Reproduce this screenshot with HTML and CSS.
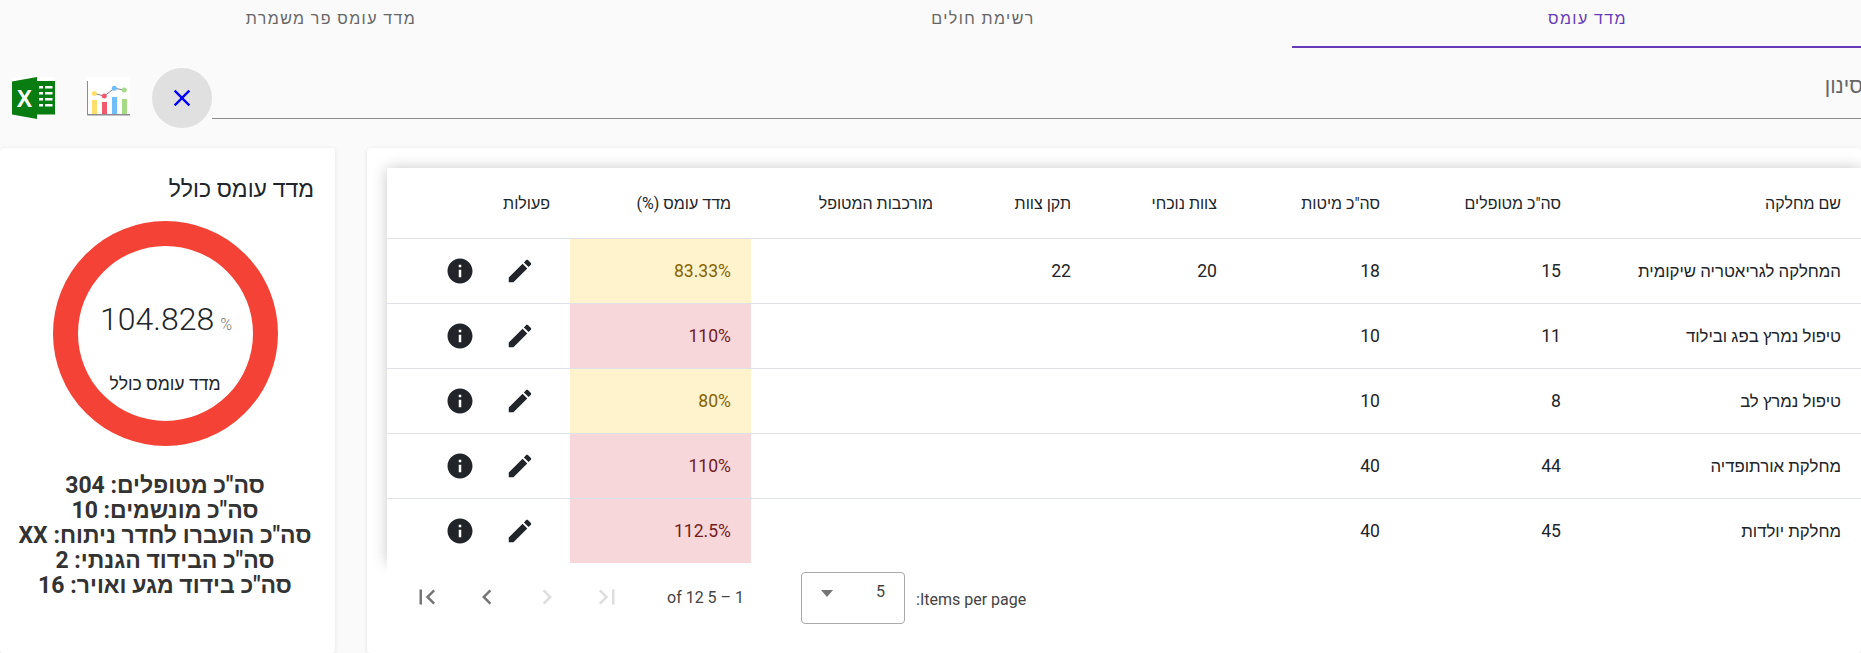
FILE: index.html
```html
<!DOCTYPE html>
<html lang="he" dir="rtl">
<head>
    <meta charset="UTF-8">
    <title>מדד עומס</title>
    <link rel="stylesheet" href="styles.css">
</head>
<body>
    <!-- Tabs -->
    <div class="tabs">
        <div class="tab tab-active">מדד עומס</div>
        <div class="tab tab-second">רשימת חולים</div>
        <div class="tab tab-third">מדד עומס פר משמרת</div>
    </div>

    <!-- Filter row -->
    <div class="filter-row">
        <div class="filter-field"><span class="filter-label">סינון</span></div>
        <button class="clear-button">
            <svg class="clear-icon" viewBox="0 0 24 24"><path d="M19 6.41L17.59 5 12 10.59 6.41 5 5 6.41 10.59 12 5 17.59 6.41 19 12 13.41 17.59 19 19 17.59 13.41 12z"/></svg>
        </button>
        <svg class="chart-icon" viewBox="0 0 43 42">
            <rect width="43" height="42" fill="#fff"/>
            <rect x="5" y="23" width="5" height="14" fill="#ffdf6b"/>
            <rect x="15" y="25" width="5" height="12" fill="#f2596c"/>
            <rect x="25" y="20" width="5" height="17" fill="#70bdfb"/>
            <rect x="35" y="22" width="5" height="15" fill="#a5da86"/>
            <rect x="0" y="4" width="1" height="34" fill="#8f8a90"/>
            <rect x="0" y="37" width="43" height="1.5" fill="#8f8a90"/>
            <polyline points="7.3,16.5 17.3,19 27.3,11.3 37.3,13" fill="none" stroke="#8a7f8a" stroke-width="1"/>
            <circle cx="7.3" cy="16.5" r="2.5" fill="#ffdf6b"/>
            <circle cx="17.3" cy="19" r="2.5" fill="#f2596c"/>
            <circle cx="27.3" cy="11.3" r="2.5" fill="#70bdfb"/>
            <circle cx="37.3" cy="13" r="2.5" fill="#a5da86"/>
        </svg>
        <svg class="excel-icon" viewBox="0 0 43 42">
            <rect width="43" height="42" fill="#fff"/>
            <rect x="24" y="4" width="19" height="33.5" fill="#0a7d12"/>
            <g fill="#fff">
                <rect x="27" y="9" width="4" height="2.5"/><rect x="33" y="9" width="7.5" height="2.5"/>
                <rect x="27" y="15" width="4" height="2.5"/><rect x="33" y="15" width="7.5" height="2.5"/>
                <rect x="27" y="21" width="4" height="2.5"/><rect x="33" y="21" width="7.5" height="2.5"/>
                <rect x="27" y="27" width="4" height="2.5"/><rect x="33" y="27" width="7.5" height="2.5"/>
            </g>
            <polygon points="0,4.5 25,0 25,42 0,37.5" fill="#0a7d12"/>
            <text x="12.5" y="30" class="excel-letter">X</text>
        </svg>
    </div>

    <div class="main">
        <!-- Department table -->
        <div class="card table-card">
            <div class="table-wrap">
                <table class="load-table">
                    <colgroup>
                        <col class="col-name"><col class="col-patients"><col class="col-beds"><col class="col-staff">
                        <col class="col-norm"><col class="col-complex"><col class="col-load"><col class="col-actions">
                    </colgroup>
                    <thead>
                        <tr>
                            <th>שם מחלקה</th>
                            <th>סה"כ מטופלים</th>
                            <th>סה"כ מיטות</th>
                            <th>צוות נוכחי</th>
                            <th>תקן צוות</th>
                            <th>מורכבות המטופל</th>
                            <th>מדד עומס (%)</th>
                            <th>פעולות</th>
                        </tr>
                    </thead>
                    <tbody id="tableBody"></tbody>
                </table>
            </div>

            <div class="paginator">
                <span class="page-label">Items per page:</span>
                <div class="page-select">
                    <span class="page-select-value">5</span>
                    <span class="page-select-arrow"></span>
                </div>
                <span class="page-range">1 – 5 of 12</span>
                <div class="page-buttons">
                    <svg class="page-icon disabled" viewBox="0 0 24 24"><path d="M5.59 7.41L10.18 12l-4.59 4.59L7 18l6-6-6-6zM16 6h2v12h-2z"/></svg>
                    <svg class="page-icon disabled" viewBox="0 0 24 24"><path d="M10 6L8.59 7.41 13.17 12l-4.58 4.59L10 18l6-6z"/></svg>
                    <svg class="page-icon" viewBox="0 0 24 24"><path d="M15.41 7.41L14 6l-6 6 6 6 1.41-1.41L10.83 12z"/></svg>
                    <svg class="page-icon" viewBox="0 0 24 24"><path d="M18.41 16.59L13.82 12l4.59-4.59L17 6l-6 6 6 6zM6 6h2v12H6z"/></svg>
                </div>
            </div>
        </div>

        <!-- Overall gauge -->
        <div class="card gauge-card">
            <h2 class="gauge-title">מדד עומס כולל</h2>
            <div class="gauge">
                <div class="gauge-value" dir="ltr">104.828<span class="gauge-unit">%</span></div>
                <div class="gauge-label">מדד עומס כולל</div>
            </div>
            <div class="gauge-stats">
                <div>סה"כ מטופלים: 304</div>
                <div>סה"כ מונשמים: 10</div>
                <div>סה"כ הועברו לחדר ניתוח: XX</div>
                <div>סה"כ הבידוד הגנתי: 2</div>
                <div>סה"כ בידוד מגע ואויר: 16</div>
            </div>
        </div>
    </div>

    <script>
        const rows = [
            ['המחלקה לגריאטריה שיקומית', 15, 18, 20, 22, '83.33%', 'warn'],
            ['טיפול נמרץ בפג ובילוד', 11, 10, '', '', '110%', 'high'],
            ['טיפול נמרץ לב', 8, 10, '', '', '80%', 'warn'],
            ['מחלקת אורתופדיה', 44, 40, '', '', '110%', 'high'],
            ['מחלקת יולדות', 45, 40, '', '', '112.5%', 'high']
        ];
        const editPath = 'M3 17.25V21h3.75L17.81 9.94l-3.75-3.75L3 17.25zM20.71 7.04c.39-.39.39-1.02 0-1.41l-2.34-2.34c-.39-.39-1.02-.39-1.41 0l-1.83 1.83 3.75 3.75 1.83-1.83z';
        const infoPath = 'M12 2C6.48 2 2 6.48 2 12s4.48 10 10 10 10-4.48 10-10S17.52 2 12 2zm1 15h-2v-6h2v6zm0-8h-2V7h2v2z';
        const tableBody = document.getElementById('tableBody');

        // Build the table rows
        rows.forEach(row => {
            const tr = document.createElement('tr');
            tr.innerHTML = `
                <td class="name-cell">${row[0]}</td><td>${row[1]}</td><td>${row[2]}</td><td>${row[3]}</td><td>${row[4]}</td><td></td>
                <td class="load-${row[6]}">${row[5]}</td>
                <td><div class="actions">
                    <svg class="action-icon" viewBox="0 0 24 24"><path d="${editPath}"/></svg>
                    <svg class="action-icon" viewBox="0 0 24 24"><path d="${infoPath}"/></svg>
                </div></td>`;
            tableBody.appendChild(tr);
        });
    </script>
</body>
</html>
```

FILE: styles.css
```css
body {
    margin: 0;
    width: 1861px;
    height: 653px;
    overflow: hidden;
    background-color: #fafafa;
    color: #212529;
    font-family: Roboto, "Liberation Sans", sans-serif;
}

/* Tabs */
.tabs {
    display: grid;
    grid-template-columns: 569px 618px 674px;
    height: 48px;
}
.tab {
    padding-top: 9px;
    box-sizing: border-box;
    text-align: center;
    font-size: 16px;
    line-height: 20px;
    letter-spacing: 1.4px;
    color: #666;
}
.tab-active {
    padding-left: 22px;
    color: #673ab7;
    border-bottom: 2px solid #673ab7;
}
.tab-third {
    padding-right: 12px;
}

/* Filter row */
.filter-row {
    display: flex;
    align-items: flex-start;
    height: 100px;
    padding: 20px 0 0 12px;
    box-sizing: border-box;
}
.filter-field {
    flex: 1;
    height: 51px;
    border-bottom: 1px solid #8c8c8c;
    box-sizing: border-box;
    padding-top: 8px;
    font-size: 21px;
    color: #666;
    line-height: 20px;
    overflow: hidden;
}
.filter-label {
    display: block;
    margin-right: -2px;
}
.clear-button {
    width: 60px;
    height: 60px;
    padding: 0;
    border: none;
    border-radius: 50%;
    background-color: #e0e0e0;
    display: flex;
    justify-content: center;
    align-items: center;
}
.clear-icon {
    width: 28px;
    height: 28px;
    fill: #0000ff;
}
.chart-icon {
    width: 43px;
    height: 42px;
    margin: 9px 22px 0 32px;
}
.excel-icon {
    width: 43px;
    height: 42px;
    margin-top: 9px;
}
.excel-letter {
    font-family: "Liberation Sans", sans-serif;
    font-size: 23px;
    font-weight: bold;
    fill: #fff;
    text-anchor: middle;
}

/* Cards */
.main {
    display: flex;
    gap: 32px;
    height: 505px;
}
.card {
    background-color: white;
    border-radius: 4px;
    box-sizing: border-box;
    box-shadow: 0 1px 4px rgba(0, 0, 0, 0.1);
}
.table-card {
    width: 1494px;
    padding: 20px 0 0 20px;
}
.gauge-card {
    width: 335px;
    padding: 0 22px 0 17px;
}

/* Table */
.table-wrap {
    height: 395px;
    box-shadow: 0 0 14px rgba(0, 0, 0, 0.22);
}
.load-table {
    width: 1474px;
    table-layout: fixed;
    border-collapse: collapse;
}
.col-name { width: 280px; }
.col-patients { width: 181px; }
.col-beds { width: 163px; }
.col-staff { width: 146px; }
.col-norm { width: 138px; }
.col-complex { width: 202px; }
.col-load { width: 181px; }
.col-actions { width: 183px; }
.load-table th {
    height: 70px;
    padding: 0 20px 0 0;
    text-align: right;
    font-size: 16px;
    font-weight: 400;
    border-bottom: 1px solid #dee2e6;
    background-color: white;
}
.load-table td {
    height: 65px;
    padding: 0 20px 0 0;
    box-sizing: border-box;
    text-align: right;
    font-size: 17.6px;
    border-bottom: 1px solid #dee2e6;
    background-color: white;
}
.load-table .name-cell {
    font-size: 16.8px;
}
.load-table tr:last-child td {
    border-bottom: none;
}
.load-table .load-warn {
    background-color: #fff3cd;
    color: #856404;
}
.load-table .load-high {
    background-color: #f8d7da;
    color: #721c24;
}
.actions {
    display: flex;
    gap: 30px;
    padding-right: 15px;
}
.action-icon {
    width: 30px;
    height: 30px;
    fill: #212529;
}

/* Paginator */
.paginator {
    position: relative;
    background-color: white;
    display: flex;
    align-items: flex-start;
    justify-content: flex-end;
    padding: 9px 0 0 25px;
    font-size: 16px;
    color: #444;
}
.page-label {
    margin: 18px 0 0 11px;
    line-height: 20px;
}
.page-select {
    width: 104px;
    height: 52px;
    border: 1px solid #aaa;
    border-radius: 4px;
    box-sizing: border-box;
    display: flex;
    justify-content: space-between;
    padding: 9px 19px 0 19px;
    line-height: 20px;
}
.page-select-arrow {
    margin-top: 8px;
    width: 0;
    height: 0;
    border-left: 6px solid transparent;
    border-right: 6px solid transparent;
    border-top: 7px solid #757575;
}
.page-range {
    margin: 16px 57px 0 45px;
    line-height: 20px;
}
.page-buttons {
    display: flex;
    gap: 30px;
    margin-top: 10px;
}
.page-icon {
    width: 30px;
    height: 30px;
    fill: #757575;
}
.page-icon.disabled {
    fill: #dedede;
}

/* Gauge */
.gauge-title {
    margin: 0;
    padding: 28px 0 0 0;
    font-size: 23px;
    line-height: 28px;
    font-weight: 400;
    margin-right: -1px;
}
.gauge {
    width: 225px;
    height: 225px;
    margin: 17px auto 0;
    border: 25px solid #f44336;
    border-radius: 50%;
    box-sizing: border-box;
    text-align: center;
}
.gauge-value {
    margin-top: 53px;
    padding-left: 2px;
    font-size: 32px;
    font-weight: 300;
    line-height: 40px;
}
.gauge-unit {
    margin-left: 6px;
    font-size: 16px;
    color: #757575;
}
.gauge-label {
    margin-top: 29px;
    font-size: 17.6px;
    line-height: 20px;
}
.gauge-stats {
    margin: 27px -15px 0;
    text-align: center;
    font-size: 23px;
    font-weight: 700;
    line-height: 25px;
    color: #333;
}
```
